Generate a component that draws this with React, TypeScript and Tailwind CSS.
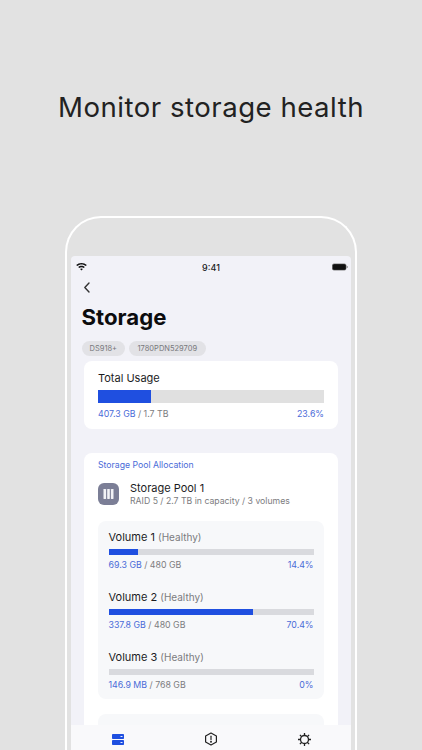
const font = { fontFamily: "Inter, 'Noto Sans', sans-serif" };

function Wifi() {
  return (
    <svg width="11" height="8" viewBox="0 0 11 8" fill="#111">
      <path d="M5.5 0C3.4 0 1.6.8.2 2.1l1 1C2.3 2 3.8 1.4 5.5 1.4s3.2.6 4.3 1.7l1-1C9.4.8 7.6 0 5.5 0z" />
      <path d="M5.5 2.8c-1.3 0-2.4.5-3.3 1.3l1 1c.6-.5 1.4-.9 2.3-.9s1.7.4 2.3.9l1-1c-.9-.8-2-1.3-3.3-1.3z" />
      <path d="M5.5 5.5c-.6 0-1.1.2-1.4.6L5.5 7.6l1.4-1.5c-.3-.4-.8-.6-1.4-.6z" />
    </svg>
  );
}

function Battery() {
  return (
    <svg width="16" height="8" viewBox="0 0 16 8">
      <rect x="0.4" y="0.9" width="13.6" height="6.2" rx="1.6" fill="#111" stroke="#555" strokeWidth="0.6" />
      <rect x="14.6" y="3" width="1" height="2" rx="0.5" fill="#777" />
    </svg>
  );
}

function Bar({ pct, h, track }: { pct: number; h: string; track: string }) {
  return (
    <div className={`w-full ${h} ${track}`}>
      <div className="h-full bg-[#1f4fe0]" style={{ width: `${pct}%` }} />
    </div>
  );
}

function Volume({ name, used, total, pct, w }: { name: string; used: string; total: string; pct: string; w: number }) {
  return (
    <div className="flex flex-col">
      <div className="h-[16px] text-[11px] leading-[16px] text-[#1c1c1e]">
        {name} <span className="text-[10px] text-[#7c7c80]">(Healthy)</span>
      </div>
      <div className="mt-[4px]">
        <Bar pct={w} h="h-[6px]" track="bg-[#d9dade]" />
      </div>
      <div className="mt-[4px] flex h-[12px] items-center justify-between text-[8.8px] leading-[12px]">
        <span className="text-[#7c7c80]">
          <span className="text-[#4a6bd8]">{used}</span> / {total}
        </span>
        <span className="text-[#4a6bd8]">{pct}</span>
      </div>
    </div>
  );
}

export default function App() {
  return (
    <div style={font} className="flex h-[750px] w-[422px] flex-col items-center overflow-hidden bg-[#e2e2e2]">
      <h1 className="mt-[89px] h-[36px] whitespace-nowrap text-center text-[27.6px] font-normal leading-[36px] tracking-[0.5px] text-[#222222]">
        Monitor storage health
      </h1>
      <div className="mt-[91px] flex h-[540px] w-[292px] shrink-0 flex-col rounded-t-[36px] border-x-2 border-t-2 border-white px-[4px] pt-[38px]">
        <div className="flex h-[494px] flex-col overflow-hidden rounded-t-[4px] bg-[#f2f2f8]">
          <div className="grid h-[22px] shrink-0 grid-cols-3 items-center pl-[5px] pr-[3px]">
            <div className="justify-self-start">
              <Wifi />
            </div>
            <span className="justify-self-center pr-[2px] pt-[1px] text-[9px] font-medium text-[#1c1c1e]">9:41</span>
            <div className="justify-self-end">
              <Battery />
            </div>
          </div>
          <div className="flex h-[447px] flex-col overflow-hidden">
            <div className="flex h-[18px] shrink-0 items-center pl-[12px]">
              <svg width="8" height="11" viewBox="0 0 8 11" fill="none" stroke="#333" strokeWidth="1.4" strokeLinecap="round" strokeLinejoin="round">
                <path d="M6 1 L1.8 5.5 L6 10" />
              </svg>
            </div>
            <div className="ml-[10.5px] mt-[5px] h-[32px] shrink-0 text-[22.2px] font-bold leading-[32px] text-[#0c0c0e]">
              Storage
            </div>
            <div className="ml-[10.5px] mt-[8px] flex shrink-0 gap-[3.5px]">
              <span className="flex h-[15px] items-center rounded-full bg-[#e2e2e6] px-[8px] text-[7.5px] text-[#77777b]">DS918+</span>
              <span className="flex h-[15px] items-center rounded-full bg-[#e2e2e6] px-[9px] text-[7.5px] text-[#77777b]">1780PDN529709</span>
            </div>
            <div className="mx-[13px] mt-[5px] flex h-[68px] shrink-0 flex-col rounded-[8px] bg-white px-[14px] pt-[10px]">
              <div className="h-[14px] text-[11px] leading-[14px] text-[#1c1c1e]">Total Usage</div>
              <div className="mt-[5px]">
                <Bar pct={23.6} h="h-[13px]" track="bg-[#e0e0e0]" />
              </div>
              <div className="mt-[5px] flex h-[12px] items-center justify-between text-[8.8px] leading-[12px]">
                <span className="text-[#7c7c80]">
                  <span className="text-[#4a6bd8]">407.3 GB</span> / 1.7 TB
                </span>
                <span className="text-[#4a6bd8]">23.6%</span>
              </div>
            </div>
            <div className="mx-[13px] mt-[24px] flex shrink-0 flex-col rounded-t-[8px] bg-white px-[14px] pt-[6px]">
              <div className="h-[12px] text-[8.7px] leading-[12px] text-[#4a6bd8]">Storage Pool Allocation</div>
              <div className="mt-[12px] flex h-[22px] items-center gap-[11px]">
                <div className="flex h-[22px] w-[21px] items-center justify-center rounded-[6px] bg-[#7b7e96]">
                  <svg width="11" height="10" viewBox="0 0 11 10" fill="#f2f2f6">
                    <rect x="0.5" y="0" width="2.6" height="10" rx="0.4" />
                    <rect x="4.2" y="0" width="2.6" height="10" rx="0.4" />
                    <rect x="7.9" y="0" width="2.6" height="10" rx="0.4" />
                  </svg>
                </div>
                <div className="flex flex-col">
                  <div className="h-[14px] text-[11px] leading-[14px] text-[#1c1c1e]">Storage Pool 1</div>
                  <div className="h-[13px] text-[8.7px] leading-[13px] text-[#7c7c80]">RAID 5 / 2.7 TB in capacity / 3 volumes</div>
                </div>
              </div>
              <div className="mt-[16px] flex flex-col gap-[18px] rounded-[8px] bg-[#f7f8fa] px-[10.5px] pb-[8px] pt-[8px]">
                <Volume name="Volume 1" used="69.3 GB" total="480 GB" pct="14.4%" w={14.4} />
                <Volume name="Volume 2" used="337.8 GB" total="480 GB" pct="70.4%" w={70.4} />
                <Volume name="Volume 3" used="146.9 MB" total="768 GB" pct="0%" w={0} />
              </div>
              <div className="mt-[15px] h-[40px] rounded-t-[8px] bg-[#f7f8fa]" />
            </div>
          </div>
          <div className="grid h-[25px] shrink-0 grid-cols-3 items-center justify-items-center bg-[#f9f9fb] pt-[3px]">
            <svg width="12" height="11" viewBox="0 0 12 11" fill="#1f4fe0">
              <rect x="0" y="0" width="12" height="5" rx="0.8" />
              <rect x="0" y="6" width="12" height="5" rx="0.8" />
              <rect x="8.5" y="2" width="2" height="1" fill="#e8ecff" />
              <rect x="8.5" y="8" width="2" height="1" fill="#e8ecff" />
            </svg>
            <svg width="14" height="14" viewBox="0 0 14 14" fill="none" stroke="#222" strokeWidth="1.2" strokeLinejoin="round">
              <path d="M7 1 L12.4 4 V10 L7 13 L1.6 10 V4 Z" />
              <path d="M7 4.2 V7.6" strokeLinecap="round" />
              <circle cx="7" cy="9.8" r="0.4" fill="#222" />
            </svg>
            <svg width="15" height="15" viewBox="0 0 15 15" fill="none" stroke="#222" strokeWidth="1.3">
              <circle cx="7.5" cy="7.5" r="4" />
              <path d="M7.5 1 V3.5 M7.5 11.5 V14 M1 7.5 H3.5 M11.5 7.5 H14 M2.9 2.9 L4.7 4.7 M10.3 10.3 L12.1 12.1 M2.9 12.1 L4.7 10.3 M10.3 4.7 L12.1 2.9" />
            </svg>
          </div>
        </div>
      </div>
    </div>
  );
}
